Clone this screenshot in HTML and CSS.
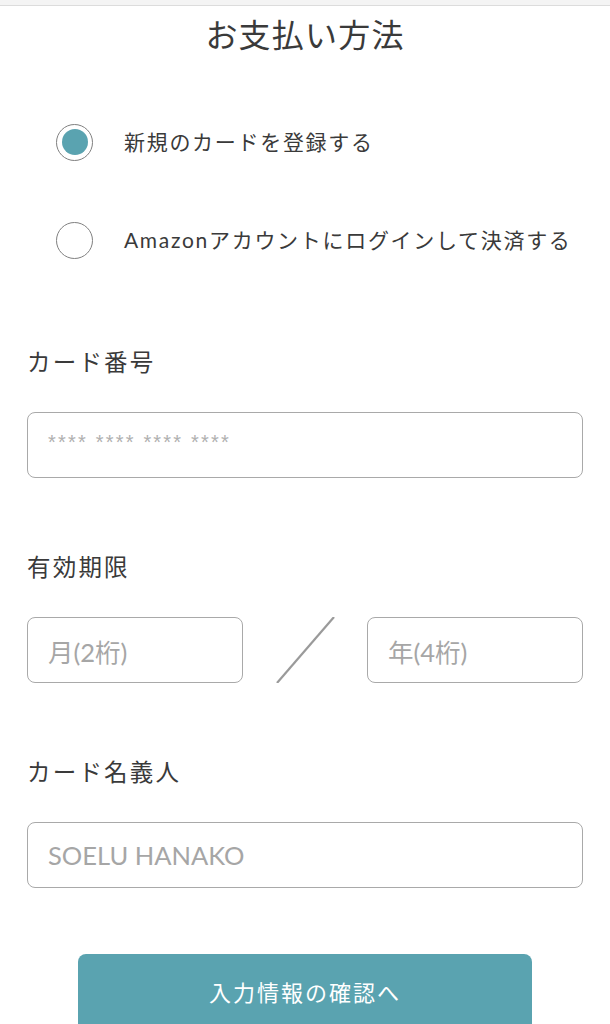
FILE: index.html
```html
<!DOCTYPE html>
<html lang="ja">
<head>
<meta charset="utf-8">
<title>お支払い方法</title>
<link rel="stylesheet" href="styles.css">
</head>
<body>
<div class="topbar"></div>
<h1 class="title">お支払い方法</h1>
<div class="radios">
  <div class="radio-row">
    <span class="radio checked"><span class="dot"></span></span>
    <span class="radio-label">新規のカードを登録する</span>
  </div>
  <div class="radio-row">
    <span class="radio"></span>
    <span class="radio-label">Amazonアカウントにログインして決済する</span>
  </div>
</div>
<div class="form">
  <div class="field">
    <div class="label">カード番号</div>
    <div class="input"><span class="stars">**** **** **** ****</span></div>
  </div>
  <div class="field">
    <div class="label">有効期限</div>
    <div class="expiry">
      <div class="input"><span class="ph">月(2桁)</span></div>
      <div class="slash">
        <svg width="124" height="66" viewBox="0 0 124 66"><line x1="34" y1="66" x2="91" y2="0" stroke="#9a9a9a" stroke-width="2.2"/></svg>
      </div>
      <div class="input"><span class="ph">年(4桁)</span></div>
    </div>
  </div>
  <div class="field">
    <div class="label">カード名義人</div>
    <div class="input"><span class="ph">SOELU HANAKO</span></div>
  </div>
</div>
<div class="actions">
  <button class="submit">入力情報の確認へ</button>
</div>
</body>
</html>
```
FILE: styles.css
```css
* { box-sizing: border-box; }
html, body { margin: 0; padding: 0; background: #fff; }
body {
  font-family: Lato, "Noto Sans CJK JP", sans-serif;
  color: #3a3a3a;
}
.topbar {
  height: 6px;
  background: #f4f4f4;
  border-bottom: 1px solid #dcdcdc;
}
.title {
  margin: 0;
  height: 58px;
  line-height: 54px;
  text-align: center;
  font-family: "Noto Sans CJK JP", sans-serif;
  font-weight: 400;
  font-size: 32px;
  letter-spacing: 1.2px;
  color: #3a3a3a;
}
.radios {
  padding: 48px 0 0 56px;
  display: flex;
  flex-direction: column;
  gap: 38px;
}
.radio-row {
  height: 60px;
  display: flex;
  align-items: center;
  gap: 31px;
}
.radio {
  width: 37px;
  height: 37px;
  border-radius: 50%;
  border: 1.5px solid #808080;
  display: flex;
  align-items: center;
  justify-content: center;
  flex-shrink: 0;
}
.dot {
  width: 26px;
  height: 26px;
  border-radius: 50%;
  background: #5aa3b0;
}
.radio-label {
  font-size: 21px;
  letter-spacing: 1.7px;
  color: #3a3a3a;
  padding-bottom: 2px;
}
.form {
  padding: 72px 27px 0 27px;
  display: flex;
  flex-direction: column;
  gap: 69px;
}
.field {
  display: flex;
  flex-direction: column;
  gap: 30px;
}
.label {
  height: 40px;
  line-height: 38px;
  font-family: "Noto Sans CJK JP", sans-serif;
  font-size: 23.5px;
  letter-spacing: 2.2px;
  color: #3a3a3a;
}
.input {
  height: 66px;
  border: 1.5px solid #a9a9a9;
  border-radius: 8px;
  display: flex;
  align-items: center;
  padding-left: 20px;
}
.stars {
  font-family: "Liberation Sans", sans-serif;
  font-size: 20px;
  letter-spacing: 2.2px;
  color: #b0b0b0;
  padding-bottom: 6px;
}
.ph {
  font-size: 25.5px;
  color: #a6a6a6;
}
.expiry {
  display: grid;
  grid-template-columns: 216px 1fr 216px;
}
.slash {
  display: flex;
  justify-content: center;
}
.slash svg { display: block; }
.actions {
  padding-top: 66px;
  display: flex;
  justify-content: center;
}
.submit {
  width: 454px;
  height: 82px;
  border: none;
  border-radius: 8px;
  background: #5aa3b0;
  color: #fff;
  font-family: "Noto Sans CJK JP", sans-serif;
  font-size: 22px;
  letter-spacing: 2px;
  padding: 0 0 8px 0;
}
```
